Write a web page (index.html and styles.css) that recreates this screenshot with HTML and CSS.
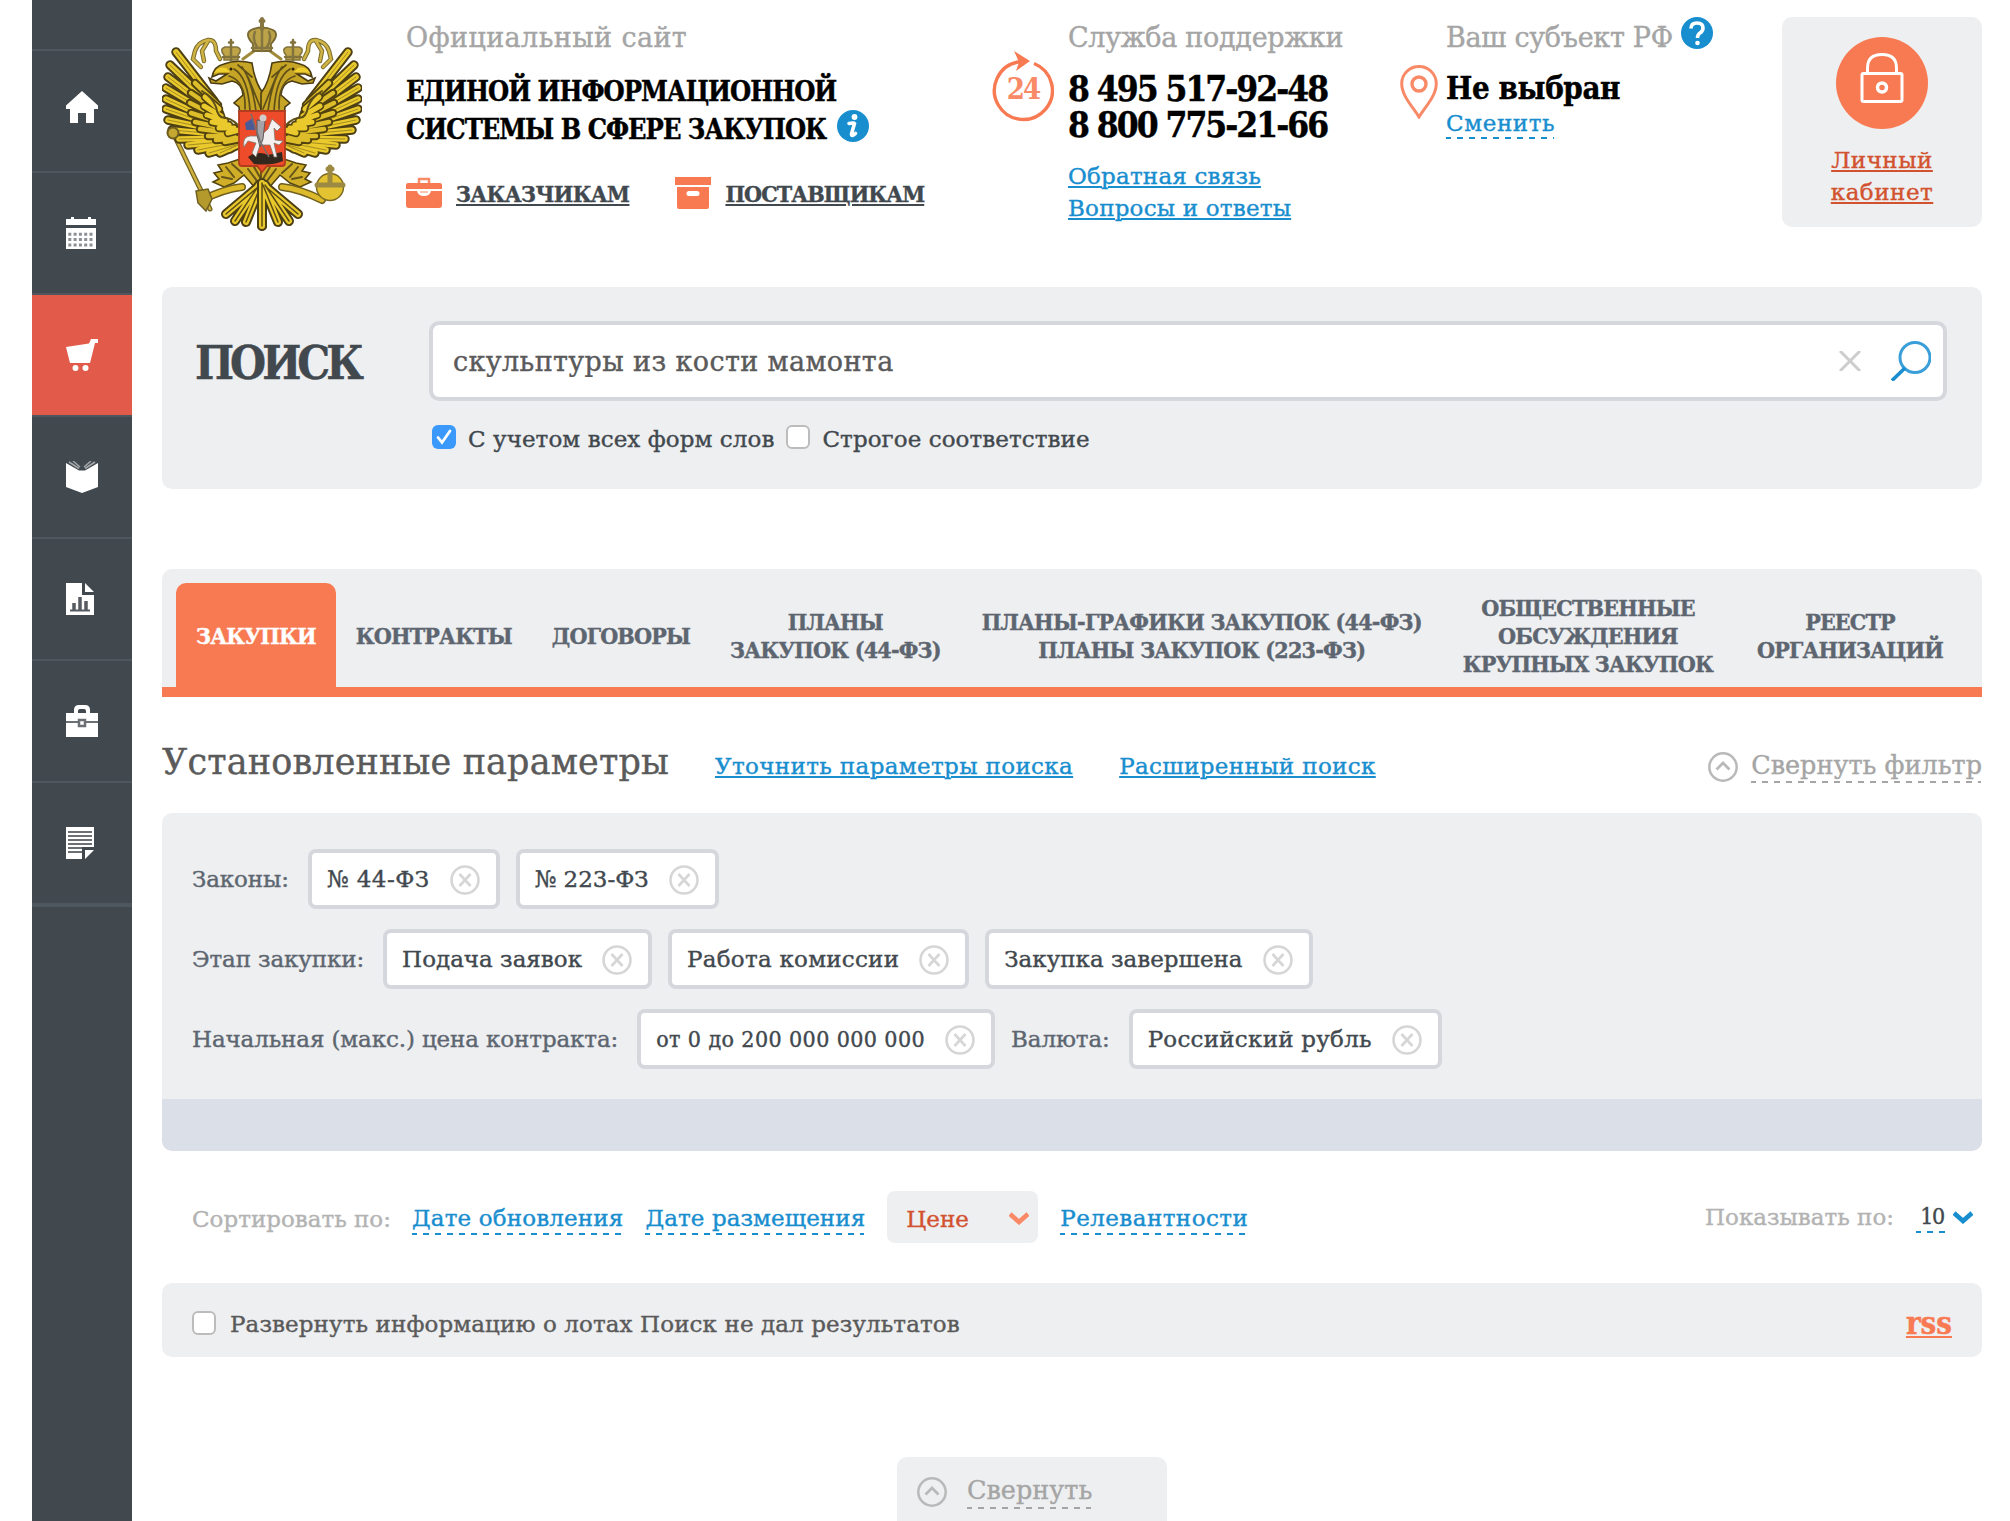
FILE: index.html
```html
<!DOCTYPE html>
<html lang="ru">
<head>
    <meta charset="UTF-8">
    <meta name="viewport" content="width=device-width, initial-scale=1.0">
    <title>Единая информационная система в сфере закупок</title>
    <link rel="stylesheet" href="styles.css">
</head>
<body>
<!-- общие иконки -->
<svg class="sprite" aria-hidden="true">
    <symbol id="ico-close" viewBox="0 0 30 30">
        <circle cx="15" cy="15" r="13.5" fill="none" stroke="#d6d6d6" stroke-width="2.6"/>
        <path d="M9.5 9L20.5 21M20.5 9L9.5 21" stroke="#d6d6d6" stroke-width="2.6" fill="none"/>
    </symbol>
    <symbol id="ico-up" viewBox="0 0 30 30">
        <circle cx="15" cy="15" r="13.7" fill="none" stroke="#b9b9b9" stroke-width="2.5"/>
        <path d="M8.5 17.5L15 11L21.5 17.5" stroke="#b9b9b9" stroke-width="2.8" fill="none"/>
    </symbol>
    <symbol id="ico-chevron" viewBox="0 0 20 13">
        <path d="M1 2L10 10L19 2" stroke="currentColor" stroke-width="4.6" fill="none"/>
    </symbol>
</svg>

<nav class="sidebar">
    <a class="sidebar-item home">
        <svg width="32" height="32" viewBox="0 0 32 32"><path fill="#fff" d="M16 0L32 14.500V18H28V32H20V22H12V32H4V18H0V14.500Z"/></svg>
    </a>
    <a class="sidebar-item">
        <svg width="30" height="32" viewBox="0 0 30 32">
            <path fill="#fff" d="M0 2H5V0H8V2H22V0H25V2H30V8H0ZM0 11H30V32H0Z"/>
            <path stroke="#8b9094" stroke-width="3" stroke-dasharray="3 2.300" d="M2.300 17.300H28M2.300 22.500H28M2.300 28H28"/>
        </svg>
    </a>
    <a class="sidebar-item active">
        <svg width="32" height="32" viewBox="0 0 32 32">
            <path fill="#fff" d="M32 0V4H29L24 24H4L0 8L23 4.500L25 0Z"/>
            <circle cx="9.500" cy="29" r="3" fill="#fff"/><circle cx="19.500" cy="29" r="3" fill="#fff"/>
        </svg>
    </a>
    <a class="sidebar-item">
        <svg width="32" height="32" viewBox="0 0 32 32">
            <path fill="#fff" d="M0 2L13 9.500H19L32 2V26L16 32L0 26Z"/>
            <path fill="none" stroke="#a4a8ab" stroke-width="1.500" d="M3 1L13 7.500M7 0L14 6M29 1L19 7.500M25 0L18 6"/>
        </svg>
    </a>
    <a class="sidebar-item">
        <svg width="28" height="32" viewBox="0 0 28 32">
            <path fill="#fff" d="M0 0H16V12H28V32H0ZM19 0L28 9H19Z"/>
            <path stroke="#555b60" stroke-width="3.500" d="M8 28V20M14 28V14M20 28V18"/>
            <path stroke="#555b60" stroke-width="2" d="M4 27.500H24"/>
        </svg>
    </a>
    <a class="sidebar-item">
        <svg width="32" height="32" viewBox="0 0 32 32">
            <path fill="#fff" d="M0 8H8V5Q8 0 13 0H19Q24 0 24 5V8H32V32H0ZM12 8H20V6Q20 4 18 4H14Q12 4 12 6Z" fill-rule="evenodd"/>
            <path stroke="#6b7075" stroke-width="2" d="M0 17H32"/>
            <rect x="13" y="15" width="6" height="6" fill="#fff" stroke="#6b7075" stroke-width="2.500"/>
        </svg>
    </a>
    <a class="sidebar-item">
        <svg width="28" height="32" viewBox="0 0 28 32">
            <path fill="#fff" d="M0 0H28V20H16V32H0ZM19 23H28L19 32Z"/>
            <path stroke="#6b7075" stroke-width="2" d="M2 5H26M2 9H26M2 13H26M2 17H26M2 21H16M2 25H16"/>
        </svg>
    </a>
</nav>

<main class="main">
    <header class="header">
        <svg class="emblem" width="200" height="214" viewBox="0 0 200 214">
            <defs>
                <path id="feathers" d="M52 84L14 35M54 92L8 48M56 98L6 60M58 103L4 71M60 108L4 82M62 112L4 92M64 115L6 103M66 118L10 113M68 121L17 122M70 124L26 128M72 126L36 133M74 128L47 136M76 128L58 136M78 126L68 132"/>
                <path id="feathers-in" d="M56 88L33 66M58 96L29 76M60 102L28 86M63 107L29 96M66 112L33 105M69 116L38 112M72 119L46 119M75 121L54 123M78 122L63 125"/>
                <path id="feathers-top" d="M57 92L43 80M59 99L42 89M63 104L45 98M67 108L50 105M72 111L57 111M77 113L66 116"/>
                <path id="tail" d="M99 168L84 205M97 168L73 204M96 170L64 197M100 166V209"/>
                <g id="half">
                    <use href="#feathers" stroke="#4e4015" stroke-width="9.5"/>
                    <use href="#feathers" stroke="#e9c92b" stroke-width="5.5"/>
                    <use href="#feathers" stroke="#a58d22" stroke-width="1"/>
                    <use href="#feathers-in" stroke="#51420f" stroke-width="8.5"/>
                    <use href="#feathers-in" stroke="#ddbd2a" stroke-width="4.5"/>
                    <use href="#feathers-top" stroke="#51420f" stroke-width="8.5"/>
                    <use href="#feathers-top" stroke="#e9c92b" stroke-width="5"/>
                    <path d="M40 74Q50 80 54 90Q56 102 64 101Q72 102 80 113" stroke="#5e4e17" stroke-width="2" fill="none"/>
                    <!-- лента -->
                    <path d="M58 42L54 34Q54 22 46 23Q36 25 33 34L31 42L39 50M46 24L40 34L42 44" stroke="#7c6d2c" stroke-width="4.5" fill="none"/>
                    <path d="M58 42L54 34Q54 22 46 23Q36 25 33 34L31 42L39 50M46 24L40 34L42 44" stroke="#cfb445" stroke-width="2.5" fill="none"/>
                    <!-- голова и шея -->
                    <path d="M90 46Q74 42 62 47Q52 49 50 60L57 57L65 57L54 64L47 61L49 66L60 67L70 64Q80 66 81 78L72 86L77 90L78 99H101V76Q93 66 90 46Z" fill="#c6a526" stroke="#4b3c12" stroke-width="1.600"/>
                    <path d="M52 56Q56 49 64 51L68 55L59 55Z" fill="#efcf2d"/>
                    <path d="M72 52Q86 60 88 94M80 50Q90 64 94 94M67 59Q84 64 83 92M76 48L90 60M86 60L99 92" fill="none" stroke="#5f4f18" stroke-width="1.700"/>
                    <circle cx="69" cy="52" r="1.500" fill="#2e2509"/>
                    <!-- малая корона -->
                    <path d="M62 43V38Q57 32 63 30H75Q81 32 76 38V43Z" fill="#bfa548" stroke="#82733c" stroke-width="1.500"/>
                    <path d="M69 23V30M67 25.500H71M69 30V43M61 40H77" stroke="#82733c" stroke-width="2.500"/>
                    <path d="M81 42L92 34" stroke="#a08b3c" stroke-width="3"/>
                    <!-- лапа -->
                    <path d="M78 142L66 146L56 148L60 154L52 156L57 162L51 165L62 170L72 166L82 158L94 172L101 178V142Z" fill="#d0ae27" stroke="#54450f" stroke-width="1.600"/>
                    <path d="M64 150L72 160M70 147L80 156M60 160L70 162M86 152L98 168M92 150L99 162" stroke="#65551a" stroke-width="2"/>
                    <path d="M80 170Q62 172 40 183" stroke="#6f5f1e" stroke-width="8" fill="none"/>
                    <path d="M80 170Q62 172 40 183" stroke="#dcba2c" stroke-width="5" fill="none"/>
                    <use href="#tail" stroke="#4e4015" stroke-width="10"/>
                    <use href="#tail" stroke="#e9c92b" stroke-width="6"/>
                    <use href="#tail" stroke="#5c4c14" stroke-width="1.500"/>
                </g>
            </defs>
            <g stroke-linecap="round" fill="none">
                <path d="M12 118L48 192" stroke="#726325" stroke-width="5"/>
                <path d="M12 118L48 192" stroke="#cdb13c" stroke-width="2.500"/>
                <use href="#half"/>
                <use href="#half" transform="translate(200 0) scale(-1 1)"/>
                <circle cx="11" cy="116" r="5.500" fill="#c5a832" stroke="#6d5d1e" stroke-width="2"/>
                <path d="M34 174L46 172L50 182L44 194L36 186Z" fill="#b49a2d" stroke="#6d5d1e" stroke-width="1.500"/>
                <circle cx="168" cy="170" r="13.500" fill="#e3c331" stroke="#7a6a25" stroke-width="1.500"/>
                <path d="M155 168H181M168 150V168" stroke="#9d8a42" stroke-width="5"/>
                <path d="M166 152H170" stroke="#9d8a42" stroke-width="5"/>
                <!-- большая корона -->
                <path d="M91 34V27Q82 17 89 13Q100 8 111 13Q118 17 109 27V34Z" fill="#bda348" stroke="#796a34" stroke-width="1.800"/>
                <path d="M100 2V12M98.500 4H101.500" stroke="#857540" stroke-width="4"/>
                <path d="M100 12V34M90 31H110M93 15Q90 22 95 30M107 15Q110 22 105 30" stroke="#857540" stroke-width="2.500"/>
            </g>
            <path d="M77 94H123V146Q123 149 120 149H105L100 155L95 149H80Q77 149 77 146Z" fill="#ee4b2b" stroke="#b23c1d" stroke-width="1.800"/>
            <path d="M86 140Q96 133 106 138L120 135L121 144Q110 149 92 147Z" fill="#33281d"/>
            <path d="M82 130Q80 120 88 119L98 119L106 112L110 102L119 110L115 114L112 111L113 123L121 124L117 128L112 126L115 140H112L108 128H98L94 140L90 136L94 126L86 124Z" fill="#f3f0ef" stroke="#84766f" stroke-width=".8"/>
            <path d="M83 106L91 101L93 113L84 113Z" fill="#4b5b98"/>
            <path d="M95 103L103 104L101 122L98 130L95 118Z" fill="#a5a3a7" stroke="#625958"/>
            <circle cx="101" cy="101" r="3.500" fill="#d1cccb"/>
            <path d="M89 97L98 124L107 140" stroke="#76706d" stroke-width="1.500" fill="none"/>
        </svg>

        <div class="site-info">
            <div class="caption">Официальный сайт</div>
            <h1 class="site-title">ЕДИНОЙ ИНФОРМАЦИОННОЙ<br>СИСТЕМЫ В СФЕРЕ ЗАКУПОК
                <svg class="info-icon" width="32" height="32" viewBox="0 0 32 32">
                    <circle cx="16" cy="16" r="16" fill="#188ecf"/>
                    <circle cx="17.500" cy="7" r="2.900" fill="#fff"/>
                    <path d="M12 13.500Q17 12.500 17.500 13.500L14.500 24Q14.500 27 18.500 23.500" stroke="#fff" stroke-width="3.600" stroke-linecap="round" fill="none"/>
                </svg>
            </h1>
            <div class="roles">
                <svg width="36" height="32" viewBox="0 0 36 32">
                    <path fill="none" stroke="#f98a67" stroke-width="2.500" d="M13 6V2H23V6"/>
                    <path fill="#f87a52" d="M0 8Q0 6 2 6H34Q36 6 36 8V12H0ZM0 14H11Q12 19 18 19Q24 19 25 14H36V28Q36 31 33 31H3Q0 31 0 28Z"/>
                    <path fill="#fcc4b2" d="M14 14H22V16H14Z"/>
                </svg>
                <a href="#">ЗАКАЗЧИКАМ</a>
                <svg width="36" height="32" viewBox="0 0 36 32">
                    <path fill="#f87a52" d="M0 0H36V8H0Z"/>
                    <path fill="#f87a52" d="M2 10H34V30Q34 32 32 32H4Q2 32 2 30Z"/>
                    <rect x="11.500" y="14" width="13" height="5" rx="2.500" fill="#fff"/>
                </svg>
                <a class="suppliers" href="#">ПОСТАВЩИКАМ</a>
            </div>
        </div>

        <svg class="icon-24" width="62" height="72" viewBox="0 0 62 72">
            <path d="M42 12.500A29 29 0 1 1 26 11L34 10.500" fill="none" stroke="#f87a52" stroke-width="3.400"/>
            <path d="M22 0L38 10L24 20L27 11Z" fill="#f87a52"/>
            <text x="31" y="48" text-anchor="middle" class="icon-24-text">24</text>
        </svg>
        <div class="support">
            <div class="caption">Служба поддержки</div>
            <div class="phones">8 495 517-92-48<br>8 800 775-21-66</div>
            <a class="link" href="#">Обратная связь</a><br>
            <a class="link" href="#">Вопросы и ответы</a>
        </div>

        <svg class="icon-pin" width="38" height="54" viewBox="0 0 38 54">
            <path d="M19 52C13 42 1.700 31 1.700 18.500A17.300 17 0 0 1 36.300 18.500C36.300 31 25 42 19 52Z" fill="none" stroke="#f98a67" stroke-width="3"/>
            <circle cx="19" cy="19" r="7" fill="none" stroke="#f98a67" stroke-width="3.400"/>
        </svg>
        <div class="region">
            <div class="caption">Ваш субъект РФ
                <svg class="help-icon" width="32" height="32" viewBox="0 0 32 32">
                    <circle cx="16" cy="16" r="16" fill="#188ecf"/>
                    <path d="M10 11.500Q10 6 16 6Q22 6 22 11Q22 14 19 16Q16.500 17.500 16.500 21" stroke="#fff" stroke-width="3.600" fill="none"/>
                    <circle cx="16.500" cy="26" r="2.300" fill="#fff"/>
                </svg>
            </div>
            <div class="region-name">Не выбран</div>
            <a class="dashed region-change">Сменить</a>
        </div>

        <div class="cabinet">
            <svg width="92" height="92" viewBox="0 0 92 92">
                <circle cx="46" cy="46" r="46" fill="#f87a52"/>
                <g fill="none" stroke="#fff" stroke-width="3">
                    <rect x="26" y="36.500" width="40" height="28" rx="1.500"/>
                    <path d="M31.500 36V31Q31.500 17.500 46 17.500Q60.500 17.500 60.500 31V36"/>
                    <circle cx="46" cy="50.500" r="4.500" stroke-width="3.500"/>
                </g>
            </svg>
            <a href="#">Личный<br>кабинет</a>
        </div>
    </header>

    <section class="search">
        <h2>ПОИСК</h2>
        <div class="search-body">
            <div class="search-box">
                <input type="text" value="скульптуры из кости мамонта">
                <svg width="22" height="20" viewBox="0 0 22 20"><path d="M1 0L21 20M21 0L1 20" stroke="#cdcdcd" stroke-width="3"/></svg>
                <svg class="search-icon" width="40" height="40" viewBox="0 0 40 40">
                    <circle cx="24" cy="16.500" r="15" fill="none" stroke="#3a9fd9" stroke-width="3"/>
                    <path d="M14 27L1 39.500" stroke="#188ecf" stroke-width="3.600"/>
                </svg>
            </div>
            <div class="search-options">
                <span class="checkbox checked"><svg width="24" height="24" viewBox="0 0 24 24"><path d="M6 12.500L10 17.500L18 6" stroke="#fff" stroke-width="2.800" fill="none" stroke-linecap="round"/></svg></span>
                <span class="option">С учетом всех форм слов</span>
                <span class="checkbox"></span>
                <span class="option">Строгое соответствие</span>
            </div>
        </div>
    </section>

    <nav class="tabs">
        <a class="tab active">ЗАКУПКИ</a>
        <a class="tab">КОНТРАКТЫ</a>
        <a class="tab">ДОГОВОРЫ</a>
        <a class="tab">ПЛАНЫ<br>ЗАКУПОК (44-ФЗ)</a>
        <a class="tab plans">ПЛАНЫ-ГРАФИКИ ЗАКУПОК (44-ФЗ)<br>ПЛАНЫ ЗАКУПОК (223-ФЗ)</a>
        <a class="tab">ОБЩЕСТВЕННЫЕ<br>ОБСУЖДЕНИЯ<br>КРУПНЫХ ЗАКУПОК</a>
        <a class="tab last">РЕЕСТР<br>ОРГАНИЗАЦИЙ</a>
    </nav>

    <div class="params-head">
        <h3>Установленные параметры</h3>
        <a class="link" href="#">Уточнить параметры поиска</a>
        <a class="link" href="#">Расширенный поиск</a>
        <div class="collapse">
            <svg width="30" height="30"><use href="#ico-up"/></svg>
            <span>Свернуть фильтр</span>
        </div>
    </div>

    <section class="params">
        <div class="params-row">
            <label>Законы:</label>
            <div class="chip short">№ 44-ФЗ <svg width="30" height="30"><use href="#ico-close"/></svg></div>
            <div class="chip">№ 223-ФЗ <svg width="30" height="30"><use href="#ico-close"/></svg></div>
        </div>
        <div class="params-row">
            <label>Этап закупки:</label>
            <div class="chip">Подача заявок <svg width="30" height="30"><use href="#ico-close"/></svg></div>
            <div class="chip wide">Работа комиссии <svg width="30" height="30"><use href="#ico-close"/></svg></div>
            <div class="chip">Закупка завершена <svg width="30" height="30"><use href="#ico-close"/></svg></div>
        </div>
        <div class="params-row">
            <label>Начальная (макс.) цена контракта:</label>
            <div class="chip price">от 0 до 200 000 000 000 <svg width="30" height="30"><use href="#ico-close"/></svg></div>
            <label>Валюта:</label>
            <div class="chip wide">Российский рубль <svg width="30" height="30"><use href="#ico-close"/></svg></div>
        </div>
    </section>
    <div class="params-footer"></div>

    <div class="sort">
        <span class="muted">Сортировать по:</span>
        <a class="dashed first">Дате обновления</a>
        <a class="dashed">Дате размещения</a>
        <a class="sort-current">Цене <svg width="20" height="13"><use href="#ico-chevron"/></svg></a>
        <a class="dashed relevance">Релевантности</a>
        <span class="muted per-page">Показывать по:</span>
        <a class="dashed count">10</a>
        <svg class="count-arrow" width="20" height="13"><use href="#ico-chevron"/></svg>
    </div>

    <section class="results">
        <span class="checkbox"></span>
        <span class="results-text">Развернуть информацию о лотах Поиск не дал результатов</span>
        <a class="rss" href="#">rss</a>
    </section>

    <div class="collapse bottom">
        <svg width="30" height="30"><use href="#ico-up"/></svg>
        <span>Свернуть</span>
    </div>
</main>
</body>
</html>
```
FILE: styles.css
```css
* {
    box-sizing: border-box;
}

body {
    margin: 0;
    height: 1521px;
    overflow: hidden;
    display: flex;
    background: #fff;
    color: #41484e;
    font-family: "Roboto Slab", "DejaVu Serif", serif;
    font-size: 23px;
    -webkit-text-stroke: 0.4px;
}

h1, h2, h3 {
    margin: 0;
}

svg {
    flex-shrink: 0;
    display: block;
}

.sprite {
    display: none;
}

a {
    color: inherit;
}

/* боковое меню */
.sidebar {
    width: 100px;
    margin-left: 32px;
    padding-top: 49px;
    background: #41484e;
    flex-shrink: 0;
}

.sidebar-item {
    display: block;
    height: 122px;
    padding: 44px 0 0 34px;
    border-top: 2px solid #4f575e;
}

.sidebar-item.home {
    padding-top: 40px;
}

.sidebar-item.active {
    background: #e25b4a;
}

.sidebar-item:last-child {
    height: 126px;
    border-bottom: 4px solid #4f575e;
}

.main {
    width: 1820px;
    margin-left: 30px;
    flex-shrink: 0;
}

/* шапка */
.header {
    display: flex;
    align-items: flex-start;
    height: 287px;
    padding-top: 17px;
}

.site-info {
    width: 586px;
    margin-left: 44px;
}

.caption {
    display: flex;
    height: 38px;
    font-size: 27px;
    line-height: 41px;
    letter-spacing: 0.4px;
    color: #a5a5a5;
    white-space: nowrap;
}

.support .caption,
.region .caption {
    letter-spacing: -0.3px;
}

.site-title {
    margin-top: 18px;
    font: bold 27px/38px "Roboto Slab", "DejaVu Serif Condensed", serif;
    letter-spacing: -1px;
    color: #000;
}

.info-icon {
    display: inline-block;
    vertical-align: top;
    margin: -1px 0 0 3px;
}

.roles {
    display: flex;
    margin-top: 28px;
    font: bold 23px/34px "Roboto Slab", "DejaVu Serif Condensed", serif;
    letter-spacing: -0.6px;
}

.roles a {
    margin: 0 46px 0 14px;
    text-decoration-thickness: 2px;
    text-underline-offset: 2px;
}

.roles .suppliers {
    letter-spacing: -0.9px;
}

.icon-24 {
    margin: 34px 14px 0 0;
}

.icon-24-text {
    font: bold 29px "Roboto Slab", "DejaVu Serif Condensed", serif;
    letter-spacing: -2px;
    fill: #f98a67;
}

.support {
    width: 332px;
    line-height: 32px;
}

.phones {
    margin: 16px 0 17px;
    font: bold 35px/36px "Roboto Slab", "DejaVu Serif Condensed", serif;
    letter-spacing: -2px;
    color: #000;
}

.link {
    color: #188ecf;
    letter-spacing: 0.2px;
    text-decoration-thickness: 2px;
    text-underline-offset: 2px;
}

.icon-pin {
    margin: 48px 8px 0 0;
}

.region {
    width: 336px;
}

.help-icon {
    margin-left: 8px;
}

.region-name {
    margin: 15px 0 4px;
    font: bold 31px/36px "Roboto Slab", "DejaVu Serif Condensed", serif;
    letter-spacing: -0.4px;
    color: #000;
}

.dashed {
    display: inline-block;
    line-height: 32px;
    color: #188ecf;
    background: repeating-linear-gradient(90deg, currentColor 0 6px, transparent 6px 12px) -1px 100% / 100% 2px no-repeat;
    white-space: nowrap;
}

.region-change {
    height: 29px;
    line-height: 26px;
    letter-spacing: 0.6px;
}

.cabinet {
    width: 200px;
    height: 210px;
    padding-top: 20px;
    display: flex;
    flex-direction: column;
    align-items: center;
    background: #eeeff1;
    border-radius: 10px;
    color: #d2522f;
    line-height: 32px;
    letter-spacing: 0.5px;
    text-align: center;
}

.cabinet a {
    margin-top: 15px;
    text-decoration-thickness: 2px;
    text-underline-offset: 2px;
}

/* поиск */
.search {
    display: flex;
    height: 202px;
    padding: 34px 35px 0 33px;
    background: #eeeff1;
    border-radius: 10px;
}

.search h2 {
    width: 234px;
    font: bold 46px/84px "Roboto Slab", "DejaVu Serif Condensed", serif;
    letter-spacing: -4px;
}

.search-body {
    flex: 1;
}

.search-box {
    display: flex;
    align-items: center;
    height: 80px;
    padding: 0 12px 0 20px;
    background: #fff;
    border: 4px solid #d5d7dd;
    border-radius: 10px;
}

.search-box input {
    flex: 1;
    padding: 0;
    border: 0;
    outline: 0;
    font: 27px "Roboto Slab", "DejaVu Serif", serif;
    letter-spacing: 0.38px;
    color: #5a5a5a;
    -webkit-text-stroke: 0.4px;
}

.search-icon {
    margin-left: 30px;
}

.search-options {
    display: flex;
    margin: 24px 0 0 3px;
}

.option {
    margin: 0 12px;
    line-height: 28px;
    letter-spacing: 0.07px;
}

.checkbox {
    width: 24px;
    height: 24px;
    flex-shrink: 0;
    background: #fff;
    border: 2px solid #bcbcbc;
    border-radius: 6px;
}

.checkbox.checked {
    background: #3b99fc;
    border: 0;
}

/* вкладки */
.tabs {
    display: flex;
    height: 128px;
    margin-top: 80px;
    padding: 14px 14px 0;
    background: #eeeff1;
    border-bottom: 10px solid #f87a52;
    border-radius: 10px 10px 0 0;
    font: bold 23px/28px "Roboto Slab", "DejaVu Serif Condensed", serif;
    letter-spacing: -0.8px;
    text-align: center;
    color: #5d6670;
}

.tab {
    display: flex;
    align-items: center;
    padding: 2px 20px 0;
    white-space: nowrap;
}

.tab.active {
    background: #f87a52;
    color: #fff;
    border-radius: 10px 10px 0 0;
}

.tab.plans {
    padding: 2px 21px 0;
    letter-spacing: -0.74px;
}

.tab.last {
    padding-left: 24px;
}

/* параметры */
.params-head {
    display: flex;
    align-items: baseline;
    height: 76px;
    margin-top: 40px;
    white-space: nowrap;
}

.params-head h3 {
    font-size: 35px;
    font-weight: normal;
    line-height: 50px;
    letter-spacing: 0.15px;
    color: #5a5a5a;
}

.params-head .link {
    margin-left: 46px;
    letter-spacing: 0.36px;
}

.collapse {
    display: flex;
    align-items: baseline;
    margin-left: auto;
    color: #a5a5a5;
    font-size: 25.5px;
}

.collapse svg {
    align-self: flex-end;
    margin: 0 13px 1px 0;
}

.collapse span {
    line-height: 36px;
    background: repeating-linear-gradient(90deg, currentColor 0 6px, transparent 6px 12px) -1px 100% / 100% 2px no-repeat;
}

.params {
    padding: 36px 30px 30px;
    background: #eeeff1;
    border-radius: 10px 10px 0 0;
}

.params-row {
    display: flex;
    line-height: 60px;
    white-space: nowrap;
}

.params-row + .params-row {
    margin-top: 20px;
}

.params-row label {
    margin-right: 19px;
    letter-spacing: -0.12px;
    color: #5d6670;
}

.chip {
    display: flex;
    align-items: center;
    height: 60px;
    padding: 0 16px 0 15px;
    margin-right: 16px;
    background: #fff;
    border: 4px solid #d5d7dd;
    border-radius: 8px;
}

.chip svg {
    margin: 2px 0 0 20px;
}

.chip.short {
    letter-spacing: 0.45px;
}

.chip.price {
    font-family: "Roboto Slab", "DejaVu Serif Condensed", serif;
    letter-spacing: 0.4px;
}

.chip.wide {
    letter-spacing: 0.25px;
}

.params-footer {
    height: 52px;
    background: #dbdfe7;
    border-radius: 0 0 10px 10px;
}

/* сортировка */
.sort {
    display: flex;
    align-items: center;
    height: 132px;
    padding: 0 9px 0 30px;
}

.sort .dashed {
    margin: 4px 0 0 22px;
    line-height: 31px;
    padding-bottom: 1px;
    letter-spacing: 0.07px;
}

.sort .dashed.first {
    margin-left: 21px;
    letter-spacing: 0.15px;
}

.muted {
    margin-top: 3px;
    color: #b3b3b3;
}

.sort-current {
    display: flex;
    align-items: center;
    justify-content: space-between;
    width: 151px;
    height: 52px;
    margin-left: 22px;
    padding: 3px 9px 0 19px;
    background: #eeeff1;
    border-radius: 8px;
    color: #d2522f;
}

.sort-current svg {
    color: #f98a67;
}

.sort .dashed.relevance {
    letter-spacing: 0.45px;
}

.muted.per-page {
    margin: 0 0 0 auto;
}

.sort .dashed.count {
    width: 32px;
    margin-top: 0;
    font-family: "Roboto Slab", "DejaVu Serif Condensed", serif;
    letter-spacing: -1.5px;
    text-align: center;
    background-image: repeating-linear-gradient(90deg, #188ecf 0 6px, transparent 6px 12px);
    color: #41484e;
}

.count-arrow {
    margin-left: 5px;
    color: #188ecf;
}

/* результаты */
.results {
    display: flex;
    height: 74px;
    padding: 28px 30px 0;
    background: #eeeff1;
    border-radius: 10px;
}

.results-text {
    margin-left: 14px;
    line-height: 27px;
    letter-spacing: 0.1px;
    color: #5a5a5a;
}

.rss {
    margin: -2px 0 0 auto;
    font: bold 31px/28px "Roboto Slab", "DejaVu Serif Condensed", serif;
    color: #f87a52;
    text-decoration-thickness: 2px;
    text-underline-offset: 2px;
}

.collapse.bottom {
    width: 270px;
    height: 64px;
    margin: 100px 0 0 735px;
    padding: 16px 20px 0;
    align-items: flex-start;
    background: #eeeff1;
    border-radius: 10px 10px 0 0;
}

.collapse.bottom svg {
    align-self: flex-start;
    margin: 4px 20px 0 0;
}

.collapse.bottom span {
    height: 36px;
    line-height: 34px;
}
```
